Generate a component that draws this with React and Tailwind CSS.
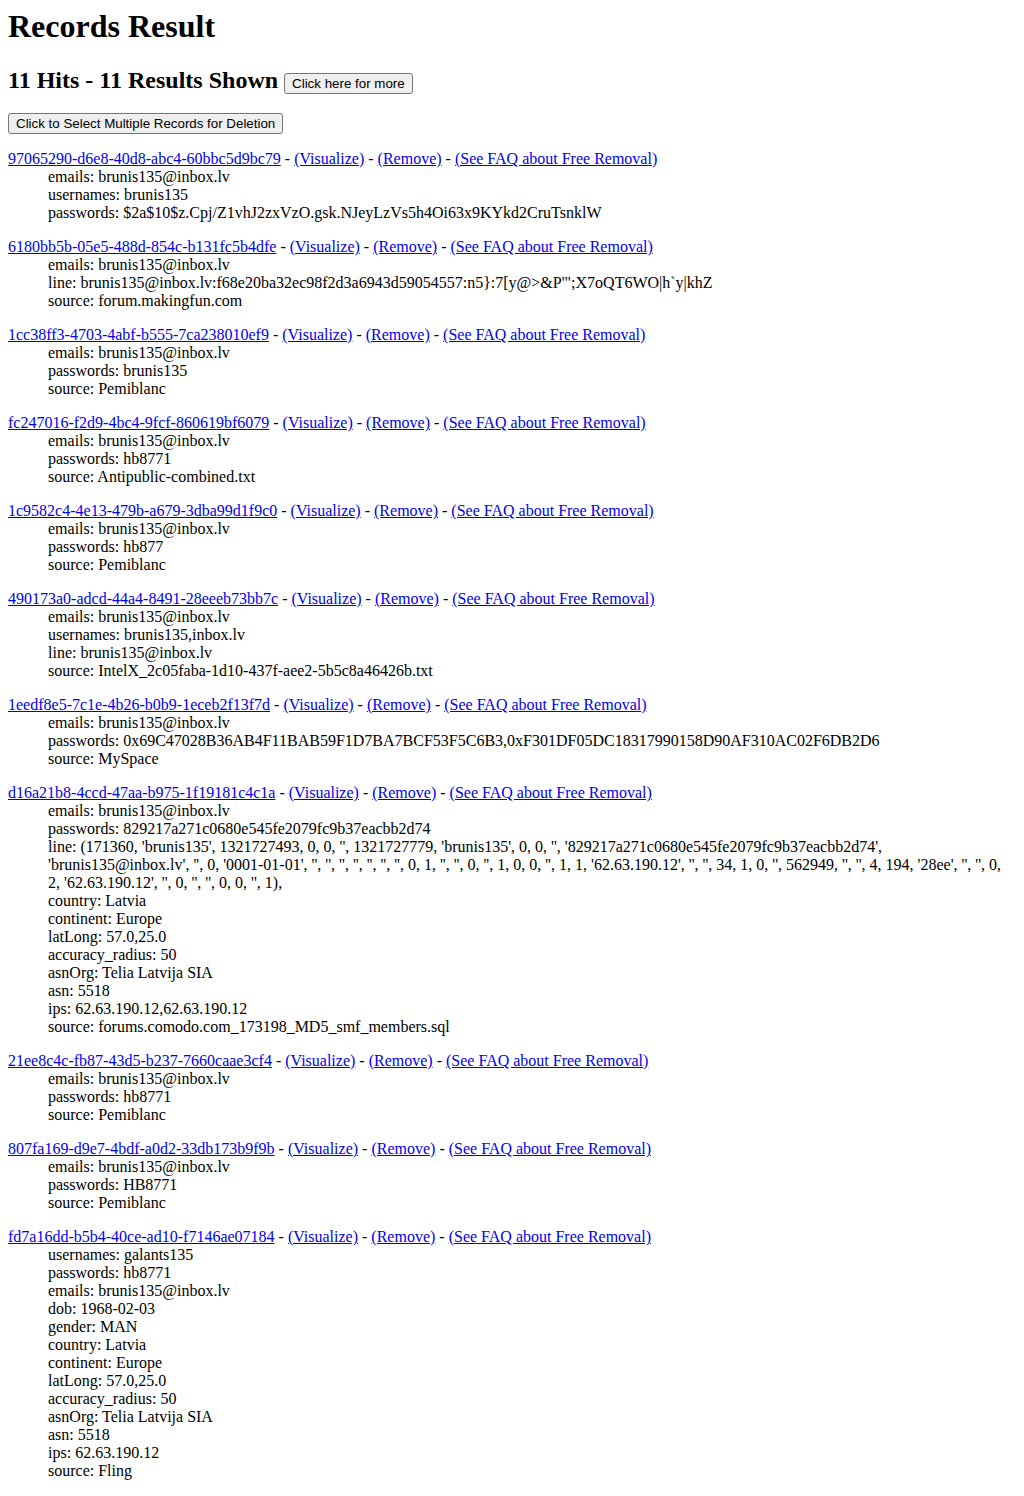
import React from "react";

const records = [
  {
    id: "97065290-d6e8-40d8-abc4-60bbc5d9bc79",
    fields: [
      ["emails", "brunis135@inbox.lv"],
      ["usernames", "brunis135"],
      ["passwords", "$2a$10$z.Cpj/Z1vhJ2zxVzO.gsk.NJeyLzVs5h4Oi63x9KYkd2CruTsnklW"],
    ],
  },
  {
    id: "6180bb5b-05e5-488d-854c-b131fc5b4dfe",
    fields: [
      ["emails", "brunis135@inbox.lv"],
      ["line", "brunis135@inbox.lv:f68e20ba32ec98f2d3a6943d59054557:n5}:7[y@>&P'\";X7oQT6WO|h`y|khZ"],
      ["source", "forum.makingfun.com"],
    ],
  },
  {
    id: "1cc38ff3-4703-4abf-b555-7ca238010ef9",
    fields: [
      ["emails", "brunis135@inbox.lv"],
      ["passwords", "brunis135"],
      ["source", "Pemiblanc"],
    ],
  },
  {
    id: "fc247016-f2d9-4bc4-9fcf-860619bf6079",
    fields: [
      ["emails", "brunis135@inbox.lv"],
      ["passwords", "hb8771"],
      ["source", "Antipublic-combined.txt"],
    ],
  },
  {
    id: "1c9582c4-4e13-479b-a679-3dba99d1f9c0",
    fields: [
      ["emails", "brunis135@inbox.lv"],
      ["passwords", "hb877"],
      ["source", "Pemiblanc"],
    ],
  },
  {
    id: "490173a0-adcd-44a4-8491-28eeeb73bb7c",
    fields: [
      ["emails", "brunis135@inbox.lv"],
      ["usernames", "brunis135,inbox.lv"],
      ["line", "brunis135@inbox.lv"],
      ["source", "IntelX_2c05faba-1d10-437f-aee2-5b5c8a46426b.txt"],
    ],
  },
  {
    id: "1eedf8e5-7c1e-4b26-b0b9-1eceb2f13f7d",
    fields: [
      ["emails", "brunis135@inbox.lv"],
      ["passwords", "0x69C47028B36AB4F11BAB59F1D7BA7BCF53F5C6B3,0xF301DF05DC18317990158D90AF310AC02F6DB2D6"],
      ["source", "MySpace"],
    ],
  },
  {
    id: "d16a21b8-4ccd-47aa-b975-1f19181c4c1a",
    fields: [
      ["emails", "brunis135@inbox.lv"],
      ["passwords", "829217a271c0680e545fe2079fc9b37eacbb2d74"],
      [
        "line",
        "(171360, 'brunis135', 1321727493, 0, 0, '', 1321727779, 'brunis135', 0, 0, '', '829217a271c0680e545fe2079fc9b37eacbb2d74', 'brunis135@inbox.lv', '', 0, '0001-01-01', '', '', '', '', '', '', '', 0, 1, '', '', 0, '', 1, 0, 0, '', 1, 1, '62.63.190.12', '', '', 34, 1, 0, '', 562949, '', '', 4, 194, '28ee', '', '', 0, 2, '62.63.190.12', '', 0, '', '', 0, 0, '', 1),",
      ],
      ["country", "Latvia"],
      ["continent", "Europe"],
      ["latLong", "57.0,25.0"],
      ["accuracy_radius", "50"],
      ["asnOrg", "Telia Latvija SIA"],
      ["asn", "5518"],
      ["ips", "62.63.190.12,62.63.190.12"],
      ["source", "forums.comodo.com_173198_MD5_smf_members.sql"],
    ],
  },
  {
    id: "21ee8c4c-fb87-43d5-b237-7660caae3cf4",
    fields: [
      ["emails", "brunis135@inbox.lv"],
      ["passwords", "hb8771"],
      ["source", "Pemiblanc"],
    ],
  },
  {
    id: "807fa169-d9e7-4bdf-a0d2-33db173b9f9b",
    fields: [
      ["emails", "brunis135@inbox.lv"],
      ["passwords", "HB8771"],
      ["source", "Pemiblanc"],
    ],
  },
  {
    id: "fd7a16dd-b5b4-40ce-ad10-f7146ae07184",
    fields: [
      ["usernames", "galants135"],
      ["passwords", "hb8771"],
      ["emails", "brunis135@inbox.lv"],
      ["dob", "1968-02-03"],
      ["gender", "MAN"],
      ["country", "Latvia"],
      ["continent", "Europe"],
      ["latLong", "57.0,25.0"],
      ["accuracy_radius", "50"],
      ["asnOrg", "Telia Latvija SIA"],
      ["asn", "5518"],
      ["ips", "62.63.190.12"],
      ["source", "Fling"],
    ],
  },
];

const linkCls = "text-[#0000ee] underline";
const btnCls =
  "inline-block h-[21px] px-[7px] border border-[#767676] rounded-[3px] bg-[#efefef] text-[13.333px] leading-[17px] font-normal text-black font-['Liberation_Sans',Arial,sans-serif] align-baseline";

function Record({ rec }) {
  return (
    <div className="mb-[16px]">
      <div>
        <a href="#" className={linkCls}>{rec.id}</a>
        {" - "}
        <a href="#" className={linkCls}>(Visualize)</a>
        {" - "}
        <a href="#" className={linkCls}>(Remove)</a>
        {" - "}
        <a href="#" className={linkCls}>(See FAQ about Free Removal)</a>
      </div>
      <div className="pl-[40px]">
        {rec.fields.map(([k, v], i) => (
          <div key={i} className="break-words">
            {k}: {v}
          </div>
        ))}
      </div>
    </div>
  );
}

export default function App() {
  return (
    <div className="bg-white text-black px-[8px] pb-[8px] text-[16px] leading-[18px] font-['Liberation_Serif','Times_New_Roman',serif]">
      <h1 className="text-[32px] font-bold leading-[37px] pt-[8px] mb-[21px]">Records Result</h1>
      <h2 className="text-[24px] font-bold leading-[28px]">
        11 Hits - 11 Results Shown <button className={btnCls}>Click here for more</button>
      </h2>
      <div className="mt-[19px] mb-[16px]">
        <button className={btnCls + " block"}>Click to Select Multiple Records for Deletion</button>
      </div>
      {records.map((r) => (
        <Record key={r.id} rec={r} />
      ))}
    </div>
  );
}
